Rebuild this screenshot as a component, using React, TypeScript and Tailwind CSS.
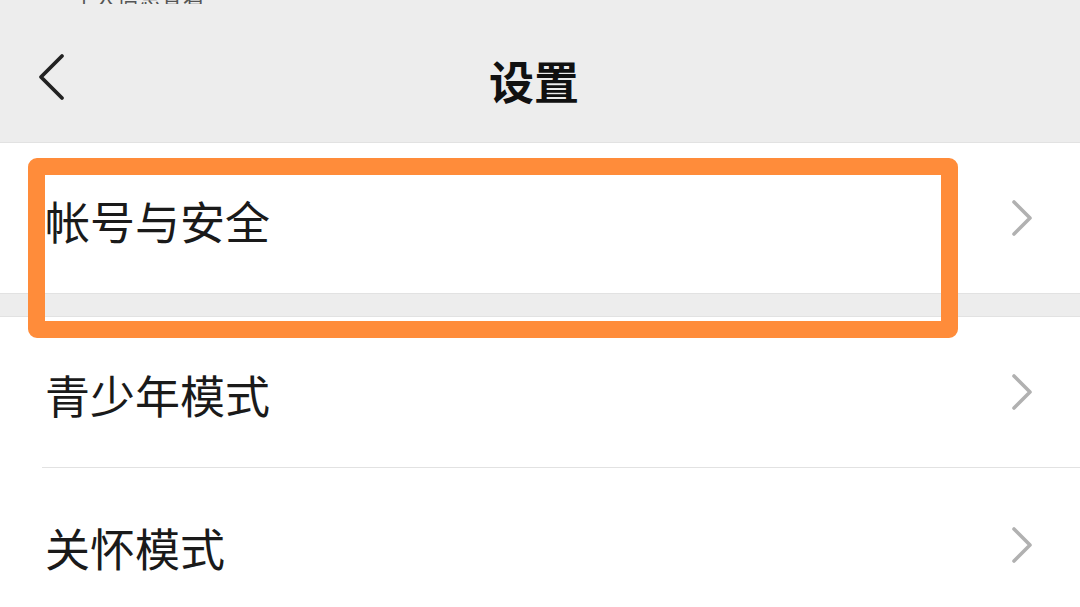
import React from 'react'

const font = { fontFamily: '"Noto Sans CJK SC", "Noto Sans", sans-serif' }

function ChevronRight() {
  return (
    <svg width="22" height="36" viewBox="0 0 22 36" fill="none" className="shrink-0">
      <path d="M3 2 L19 18 L3 34" stroke="#b1b1b1" strokeWidth="3.6" strokeLinecap="round" strokeLinejoin="round" />
    </svg>
  )
}

function ChevronLeft() {
  return (
    <svg width="30" height="48" viewBox="0 0 30 48" fill="none">
      <path d="M25 3 L4 24 L25 45" stroke="#222222" strokeWidth="3.8" strokeLinecap="round" strokeLinejoin="round" />
    </svg>
  )
}

const rows = ['帐号与安全', '青少年模式', '关怀模式']

export default function App() {
  return (
    <div className="relative w-[1080px] h-[607px] overflow-hidden bg-white" style={font}>
      {/* Header */}
      <div className="h-[143px] bg-[#ededed] border-b border-[#e2e2e2] flex flex-col">
        <div className="h-[4px] overflow-hidden pl-[73px] flex items-end">
          <span className="text-[22px] leading-[22px] text-[#555] whitespace-nowrap translate-y-[3px]">个人信息查看</span>
        </div>
        <div className="relative flex-1 flex items-center justify-center pt-[14px]">
          <div className="absolute left-[37px] top-[49px]">
            <ChevronLeft />
          </div>
          <h1 className="mr-[12px] text-[45px] font-bold text-[#111] leading-none">设置</h1>
        </div>
      </div>

      {/* Row 1 */}
      <div className="h-[150px] flex items-center justify-between pl-[45px] pr-[47px]">
        <span className="text-[45px] text-[#1a1a1a] leading-none pt-[4px]">{rows[0]}</span>
        <ChevronRight />
      </div>

      {/* Section gap */}
      <div className="h-[24px] bg-[#ededed] border-y border-[#e2e2e2]" />

      {/* Row 2 */}
      <div className="ml-[42px] h-[151px] flex items-center justify-between pl-[3px] pr-[47px] border-b border-[#e2e2e2]">
        <span className="text-[45px] text-[#1a1a1a] leading-none pt-[4px]">{rows[1]}</span>
        <ChevronRight />
      </div>

      {/* Row 3 */}
      <div className="h-[154px] flex items-center justify-between pl-[45px] pr-[47px]">
        <span className="text-[45px] text-[#1a1a1a] leading-none pt-[4px]">{rows[2]}</span>
        <ChevronRight />
      </div>

      {/* Highlight box */}
      <div className="absolute left-[28px] top-[158px] w-[930px] h-[180px] border-[17px] border-[#ff8c3a] rounded-[9px] pointer-events-none" />
    </div>
  )
}
